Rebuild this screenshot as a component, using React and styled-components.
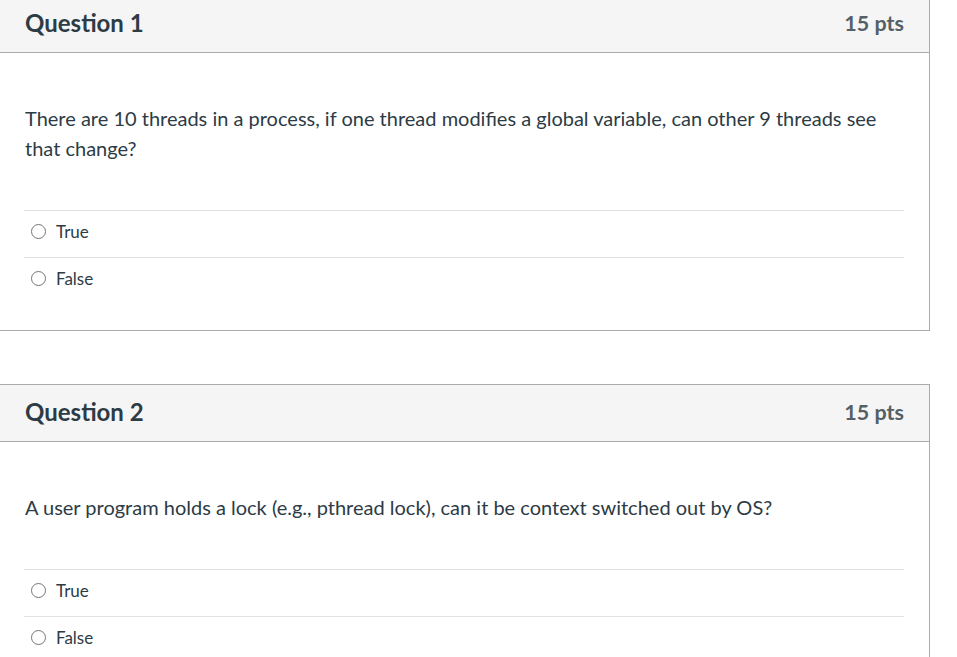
import React from 'react'
import styled, { createGlobalStyle } from 'styled-components'

const GlobalStyle = createGlobalStyle`
    body{ margin: 0; background-color: #fff; font-family: Lato, "Open Sans", sans-serif; color: #2d3b45; overflow: hidden; }
`

const QuizList = styled.div`
    width: 931px; margin: -5px 0 0 -1px; display: flex; flex-direction: column; gap: 53px;
`

const Card = styled.div`
    border: 1px solid #ababab; background-color: #fff;
`

const Header = styled.div`
    height: 57px; padding: 0 25px 3px 25px; background-color: #f5f5f5; border-bottom: 1px solid #ababab;
    display: flex; align-items: center; justify-content: space-between; box-sizing: border-box;
    h3{ margin: 0; font-size: 24px; font-weight: 700; color: #2d3b45; }
    span{ font-size: 21.5px; font-weight: 700; color: #555f66; }
`

const Body = styled.div`
    padding: 50px 25px 26px 24px;
`

const Text = styled.p`
    margin: 0 0 47px 1px; font-size: 20px; line-height: 30px; color: #2d3b45;
`

const Answer = styled.label`
    display: flex; align-items: center; height: 47px; border-top: 1px solid #e2e2e2; box-sizing: border-box;
    padding: 0 0 5px 7px; font-size: 17px; color: #2d3b45;
`

const Radio = styled.span`
    width: 15px; height: 15px; border-radius: 50%; border: 1px solid #757575; box-sizing: border-box;
    margin-right: 10px; flex-shrink: 0;
`

function Question({ title, pts, text, answers }) {
    return (
        <Card>
            <Header>
                <h3>{title}</h3>
                <span>{pts}</span>
            </Header>
            <Body>
                <Text>{text}</Text>
                {answers.map((a) => (
                    <Answer key={a}>
                        <Radio />
                        {a}
                    </Answer>
                ))}
            </Body>
        </Card>
    )
}

function App() {
    const questions = [
        {
            title: 'Question 1',
            pts: '15 pts',
            text: 'There are 10 threads in a process, if one thread modifies a global variable, can other 9 threads see that change?',
            answers: ['True', 'False']
        },
        {
            title: 'Question 2',
            pts: '15 pts',
            text: 'A user program holds a lock (e.g., pthread lock), can it be context switched out by OS?',
            answers: ['True', 'False']
        }
    ]

    return (
        <>
            <GlobalStyle />
            <QuizList>
                {questions.map((q) => (
                    <Question key={q.title} {...q} />
                ))}
            </QuizList>
        </>
    )
}

export default App
